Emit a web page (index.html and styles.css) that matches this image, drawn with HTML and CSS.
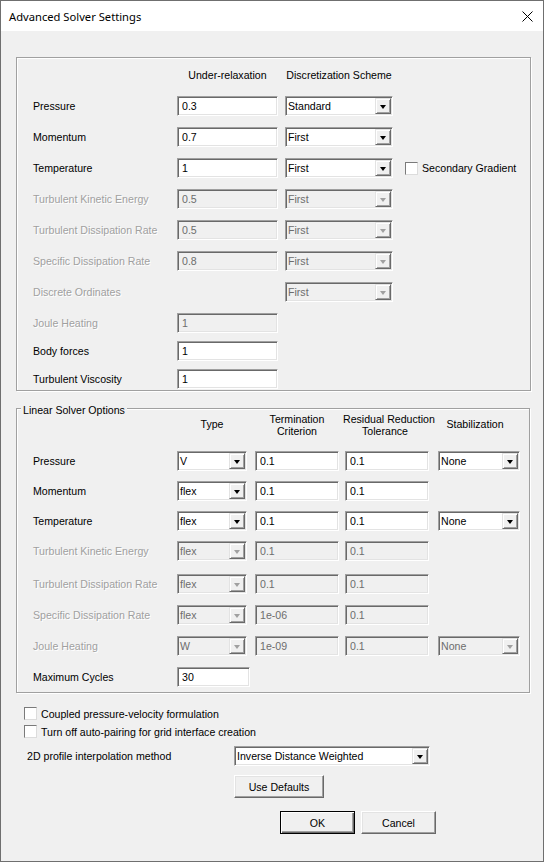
FILE: index.html
```html
<!DOCTYPE html>
<html>
<head>
    <meta charset="UTF-8">
    <title>Advanced Solver Settings</title>
    <link rel="stylesheet" href="styles.css">
</head>
<body>
    <div class="window">
        <div class="titlebar">
            <span class="title">Advanced Solver Settings</span>
            <svg class="close" width="11" height="11" viewBox="0 0 11 11">
                <path d="M0.5 0.5 L10.5 10.5 M10.5 0.5 L0.5 10.5" stroke="#000" stroke-width="1" fill="none"/>
            </svg>
        </div>

        <div class="client">
            <!-- Under-relaxation / discretization -->
            <div class="group relax-group">
                <div class="row head-row">
                    <span class="lbl"></span>
                    <span class="h-relax">Under-relaxation</span>
                    <span class="h-scheme">Discretization Scheme</span>
                </div>
                <div class="row">
                    <span class="lbl">Pressure</span>
                    <div class="edit w-relax">0.3</div>
                    <div class="combo w-scheme"><span class="combo-text">Standard</span><span class="drop"></span></div>
                </div>
                <div class="row">
                    <span class="lbl">Momentum</span>
                    <div class="edit w-relax">0.7</div>
                    <div class="combo w-scheme"><span class="combo-text">First</span><span class="drop"></span></div>
                </div>
                <div class="row">
                    <span class="lbl">Temperature</span>
                    <div class="edit w-relax">1</div>
                    <div class="combo w-scheme"><span class="combo-text">First</span><span class="drop"></span></div>
                    <span class="check gradient-check"></span>
                    <span class="check-text">Secondary Gradient</span>
                </div>
                <div class="row off">
                    <span class="lbl">Turbulent Kinetic Energy</span>
                    <div class="edit w-relax">0.5</div>
                    <div class="combo w-scheme"><span class="combo-text">First</span><span class="drop"></span></div>
                </div>
                <div class="row off">
                    <span class="lbl">Turbulent Dissipation Rate</span>
                    <div class="edit w-relax">0.5</div>
                    <div class="combo w-scheme"><span class="combo-text">First</span><span class="drop"></span></div>
                </div>
                <div class="row off">
                    <span class="lbl">Specific Dissipation Rate</span>
                    <div class="edit w-relax">0.8</div>
                    <div class="combo w-scheme"><span class="combo-text">First</span><span class="drop"></span></div>
                </div>
                <div class="row off">
                    <span class="lbl">Discrete Ordinates</span>
                    <span class="w-relax"></span>
                    <div class="combo w-scheme"><span class="combo-text">First</span><span class="drop"></span></div>
                </div>
                <div class="row off">
                    <span class="lbl">Joule Heating</span>
                    <div class="edit w-relax">1</div>
                </div>
                <div class="row tight">
                    <span class="lbl">Body forces</span>
                    <div class="edit w-relax">1</div>
                </div>
                <div class="row tight">
                    <span class="lbl">Turbulent Viscosity</span>
                    <div class="edit w-relax">1</div>
                </div>
            </div>

            <!-- Linear solver -->
            <div class="group linear-group">
                <span class="group-title">Linear Solver Options</span>
                <div class="row lhead-row">
                    <span class="lbl"></span>
                    <span class="w-type">Type</span>
                    <span class="w-term">Termination<br>Criterion</span>
                    <span class="w-res">Residual Reduction<br>Tolerance</span>
                    <span class="w-stab">Stabilization</span>
                </div>
                <div class="row first-lrow">
                    <span class="lbl">Pressure</span>
                    <div class="combo w-type"><span class="combo-text">V</span><span class="drop"></span></div>
                    <div class="edit w-term">0.1</div>
                    <div class="edit w-res">0.1</div>
                    <div class="combo w-stab"><span class="combo-text">None</span><span class="drop"></span></div>
                </div>
                <div class="row lrow">
                    <span class="lbl">Momentum</span>
                    <div class="combo w-type"><span class="combo-text">flex</span><span class="drop"></span></div>
                    <div class="edit w-term">0.1</div>
                    <div class="edit w-res">0.1</div>
                </div>
                <div class="row lrow">
                    <span class="lbl">Temperature</span>
                    <div class="combo w-type"><span class="combo-text">flex</span><span class="drop"></span></div>
                    <div class="edit w-term">0.1</div>
                    <div class="edit w-res">0.1</div>
                    <div class="combo w-stab"><span class="combo-text">None</span><span class="drop"></span></div>
                </div>
                <div class="row lrow off">
                    <span class="lbl">Turbulent Kinetic Energy</span>
                    <div class="combo w-type"><span class="combo-text">flex</span><span class="drop"></span></div>
                    <div class="edit w-term">0.1</div>
                    <div class="edit w-res">0.1</div>
                </div>
                <div class="row lrow wide off">
                    <span class="lbl">Turbulent Dissipation Rate</span>
                    <div class="combo w-type"><span class="combo-text">flex</span><span class="drop"></span></div>
                    <div class="edit w-term">0.1</div>
                    <div class="edit w-res">0.1</div>
                </div>
                <div class="row off">
                    <span class="lbl">Specific Dissipation Rate</span>
                    <div class="combo w-type"><span class="combo-text">flex</span><span class="drop"></span></div>
                    <div class="edit w-term">1e-06</div>
                    <div class="edit w-res">0.1</div>
                </div>
                <div class="row off">
                    <span class="lbl">Joule Heating</span>
                    <div class="combo w-type"><span class="combo-text">W</span><span class="drop"></span></div>
                    <div class="edit w-term">1e-09</div>
                    <div class="edit w-res">0.1</div>
                    <div class="combo w-stab"><span class="combo-text">None</span><span class="drop"></span></div>
                </div>
                <div class="row">
                    <span class="lbl">Maximum Cycles</span>
                    <div class="edit w-cycles">30</div>
                </div>
            </div>

            <div class="check-line first-check">
                <span class="check"></span>
                <span class="check-text">Coupled pressure-velocity formulation</span>
            </div>
            <div class="check-line">
                <span class="check"></span>
                <span class="check-text">Turn off auto-pairing for grid interface creation</span>
            </div>

            <div class="interp-row">
                <span class="interp-lbl">2D profile interpolation method</span>
                <div class="combo w-interp"><span class="combo-text">Inverse Distance Weighted</span><span class="drop"></span></div>
            </div>

            <div class="defaults-row">
                <button class="btn btn-wide">Use Defaults</button>
            </div>

            <div class="action-row">
                <button class="btn btn-default">OK</button>
                <button class="btn">Cancel</button>
            </div>
        </div>
    </div>
</body>
</html>
```

FILE: styles.css
```css
body {
    margin: 0;
    background: #f0f0f0;
    font-family: "Liberation Sans", Arial, sans-serif;
    font-size: 10.6px;
    color: #000;
}

.window {
    width: 544px;
    height: 862px;
    box-sizing: border-box;
    border: 1px solid #6f6f6f;
    background: #f0f0f0;
}

.titlebar {
    height: 30px;
    background: #fff;
    display: flex;
    align-items: center;
    justify-content: space-between;
    padding: 0 10px 0 8px;
}

.title {
    font-family: "Noto Sans", sans-serif;
    font-size: 11.2px;
}

.client {
    padding: 26px 15px 0 15px;
}

/* Group boxes (etched frame) */
.group {
    position: relative;
    box-sizing: border-box;
    border: 1px solid #a0a0a0;
    box-shadow: inset 1px 1px 0 #fff, 1px 1px 0 #fff;
    padding-left: 16px;
}

.relax-group {
    width: 515px;
    padding-bottom: 1px;
}

.linear-group {
    width: 514px;
    margin-top: 17px;
    padding-bottom: 5px;
}

.group-title {
    position: absolute;
    top: -5px;
    left: 4px;
    padding: 0 2px;
    line-height: 13px;
    background: #f0f0f0;
}

/* Rows */
.row {
    display: flex;
    align-items: center;
    height: 20px;
    margin-top: 11px;
}

.row.head-row {
    margin-top: 7px;
    white-space: nowrap;
}

.row.tight {
    margin-top: 8px;
}

.row.lhead-row {
    height: 24px;
    margin-top: 4px;
    line-height: 12px;
    text-align: center;
    white-space: nowrap;
}

.lhead-row .w-res {
    margin-left: 4px;
    margin-right: -2px;
}

.lhead-row .w-stab {
    margin-top: -2px;
}

.lhead-row .w-type {
    margin-top: -2px;
}

.row.first-lrow {
    margin-top: 14px;
}

.row.lrow {
    margin-top: 10px;
}

.row.lrow.wide {
    margin-top: 13px;
}

.lbl {
    width: 144px;
    flex-shrink: 0;
    white-space: nowrap;
}

.off .lbl {
    color: #a0a0a0;
    text-shadow: 1px 1px 0 #fff;
}

/* Column widths */
.w-relax {
    width: 101px;
    flex-shrink: 0;
}

.w-scheme {
    width: 108px;
    margin-left: 7px;
    flex-shrink: 0;
}

.h-relax {
    width: 101px;
    text-align: center;
}

.h-scheme {
    width: 108px;
    margin-left: 7px;
    text-align: center;
}

.w-type {
    width: 70px;
    flex-shrink: 0;
}

.w-term {
    width: 84px;
    margin-left: 8px;
    flex-shrink: 0;
}

.w-res {
    width: 84px;
    margin-left: 6px;
    flex-shrink: 0;
}

.w-stab {
    width: 82px;
    margin-left: 9px;
    flex-shrink: 0;
}

.w-cycles {
    width: 73px;
}

/* Controls */
.edit,
.combo {
    box-sizing: border-box;
    height: 20px;
    background: #fff;
    border: 1px solid;
    border-color: #a0a0a0 #fff #fff #a0a0a0;
    box-shadow: inset 1px 1px 0 #696969, inset -1px -1px 0 #e3e3e3;
    white-space: nowrap;
    overflow: hidden;
}

.edit {
    padding-left: 4px;
    line-height: 18px;
}

.combo {
    display: flex;
    padding: 1px;
}

.combo-text {
    flex: 1;
    padding-left: 1px;
    line-height: 16px;
}

.drop {
    box-sizing: border-box;
    width: 16px;
    height: 16px;
    flex-shrink: 0;
    display: flex;
    align-items: center;
    justify-content: center;
    background: #f0f0f0;
    border: 1px solid;
    border-color: #e3e3e3 #696969 #696969 #e3e3e3;
    box-shadow: inset 1px 1px 0 #fff, inset -1px -1px 0 #a0a0a0;
}

.drop::after {
    content: '';
    width: 0;
    height: 0;
    border-top: 4px solid #000;
    border-left: 3.5px solid transparent;
    border-right: 3.5px solid transparent;
    margin-top: 1px;
}

.off .edit,
.off .combo {
    background: #f0f0f0;
    color: #6d6d6d;
}

.off .drop::after {
    border-top-color: #a0a0a0;
}

.check {
    box-sizing: border-box;
    width: 13px;
    height: 13px;
    flex-shrink: 0;
    background: #fff;
    border: 1px solid;
    border-color: #7a7a7a #dcdcdc #dcdcdc #7a7a7a;
}

.gradient-check {
    margin-left: 12px;
}

.check-text {
    margin-left: 4px;
    white-space: nowrap;
}

/* Bottom area */
.check-line {
    display: flex;
    align-items: center;
    height: 13px;
    margin-top: 5px;
    margin-left: 8px;
}

.check-line.first-check {
    margin-top: 14px;
}

.interp-row {
    display: flex;
    align-items: center;
    height: 20px;
    margin-top: 8px;
}

.interp-lbl {
    width: 207px;
    margin-left: 11px;
}

.w-interp {
    width: 196px;
}

.defaults-row {
    margin-top: 9px;
    padding-left: 218px;
}

.action-row {
    display: flex;
    gap: 6px;
    margin-top: 13px;
    padding-left: 264px;
}

.btn {
    box-sizing: border-box;
    width: 75px;
    height: 23px;
    padding: 0;
    font: inherit;
    color: #000;
    background: #f0f0f0;
    border: 1px solid;
    border-color: #fff #696969 #696969 #fff;
    box-shadow: inset -1px -1px 0 #a0a0a0, inset 1px 1px 0 #e3e3e3;
}

.btn-wide {
    width: 90px;
}

.btn-default {
    border-color: #000;
    box-shadow: inset 1px 1px 0 #fff, inset -1px -1px 0 #696969, inset -2px -2px 0 #a0a0a0;
}
```
